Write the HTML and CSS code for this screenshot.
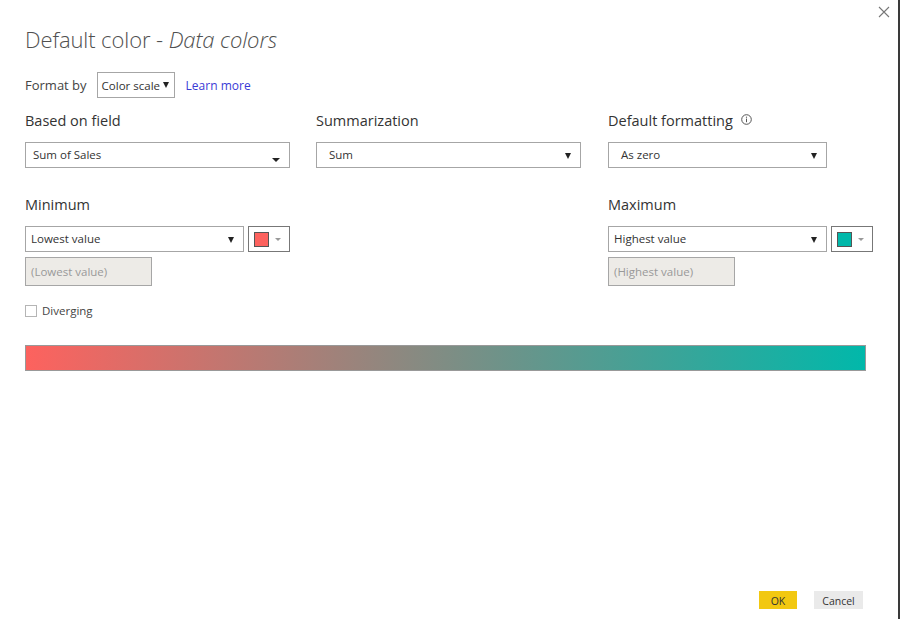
FILE: index.html
```html
<!DOCTYPE html>
<html lang="en">
<head>
    <meta charset="UTF-8">
    <title>Default color - Data colors</title>
    <link rel="stylesheet" href="styles.css">
</head>
<body>
    <div class="dialog">
        <button class="close" aria-label="Close">
            <svg width="12" height="12" viewBox="0 0 12 12"><path d="M1 1L11 11M11 1L1 11" stroke="#777" stroke-width="1.1" fill="none"/></svg>
        </button>

        <h1 class="title">Default color - <em>Data colors</em></h1>

        <div class="format-row">
            <span class="format-label">Format by</span>
            <div class="select select-small">Color scale <span class="arrow"></span></div>
            <a class="link" href="#">Learn more</a>
        </div>

        <div class="fields">
            <div class="field">
                <div class="label">Based on field</div>
                <div class="select select-field">Sum of Sales <span class="arrow arrow-low"></span></div>
            </div>
            <div class="field">
                <div class="label">Summarization</div>
                <div class="select select-wide">Sum <span class="arrow"></span></div>
            </div>
            <div class="field">
                <div class="label">Default formatting
                    <svg class="info" width="11" height="11" viewBox="0 0 11 11"><circle cx="5.5" cy="5.5" r="4.8" stroke="#555" stroke-width="1" fill="none"/><path d="M5.5 4.6V8.2" stroke="#555" stroke-width="1"/><circle cx="5.5" cy="3.2" r="0.6" fill="#555"/></svg>
                </div>
                <div class="select select-mid select-shift">As zero <span class="arrow"></span></div>
            </div>

            <div class="field field-range">
                <div class="label">Minimum</div>
                <div class="pick-row">
                    <div class="select select-mid select-tight">Lowest value <span class="arrow"></span></div>
                    <div class="color-btn"><span class="swatch swatch-low"></span><span class="mini-arrow"></span></div>
                </div>
                <div class="value-box">(Lowest value)</div>
            </div>
            <div class="field field-range"></div>
            <div class="field field-range">
                <div class="label">Maximum</div>
                <div class="pick-row">
                    <div class="select select-mid select-tight">Highest value <span class="arrow"></span></div>
                    <div class="color-btn"><span class="swatch swatch-high"></span><span class="mini-arrow"></span></div>
                </div>
                <div class="value-box">(Highest value)</div>
            </div>
        </div>

        <label class="check">
            <span class="box"></span>
            Diverging
        </label>

        <div class="gradient"></div>

        <div class="actions">
            <button class="btn btn-ok">OK</button>
            <button class="btn btn-cancel">Cancel</button>
        </div>
    </div>
</body>
</html>
```

FILE: styles.css
```css
html, body {
    margin: 0;
    height: 100%;
}

body {
    font-family: "Open Sans", "Noto Sans", Arial, sans-serif;
    color: #333;
    background: #fff;
    overflow: hidden;
}

.dialog {
    position: relative;
    box-sizing: border-box;
    width: 900px;
    height: 619px;
    padding: 0 0 10px 25px;
    border-right: 2px solid #3a3a3a;
    display: flex;
    flex-direction: column;
}

.close {
    position: absolute;
    top: 6px;
    right: 8px;
    border: none;
    background: none;
    padding: 0;
    cursor: pointer;
}

.title {
    margin: 23px 0 0;
    font-size: 22px;
    font-weight: 300;
    line-height: 32px;
    color: #505050;
    letter-spacing: -0.1px;
}

.title em {
    font-style: italic;
}

.format-row {
    display: flex;
    align-items: center;
    margin-top: 17px;
    height: 26px;
}

.format-label {
    font-size: 13px;
    margin-right: 10px;
    color: #444;
}

.link {
    font-size: 12px;
    color: #3a3ad6;
    text-decoration: none;
    margin-left: 11px;
}

.select {
    position: relative;
    box-sizing: border-box;
    height: 26px;
    border: 1px solid #a6a6a6;
    background: #fff;
    font-size: 11.5px;
    line-height: 24px;
    color: #333;
    padding-left: 8px;
}

.select-small {
    width: 78px;
    padding-left: 4px;
    font-size: 11.5px;
    line-height: 26px;
}

.select-field,
.select-wide {
    width: 265px;
}

.select-field {
    padding-left: 7px;
}

.select-wide {
    padding-left: 12px;
}

.select-mid {
    width: 219px;
}

.select-shift {
    padding-left: 12px;
}

.select-tight {
    padding-left: 5px;
}

.arrow {
    position: absolute;
    right: 9px;
    top: 10px;
    width: 0;
    height: 0;
    border-left: 3px solid transparent;
    border-right: 3px solid transparent;
    border-top: 6px solid #222;
}

.select-small .arrow {
    right: 5px;
    top: 9px;
}

.arrow-low {
    right: 9px;
    top: 15px;
    border-left-width: 4px;
    border-right-width: 4px;
    border-top-width: 4px;
}

.fields {
    display: grid;
    grid-template-columns: 291px 292px 1fr;
    margin-top: 14px;
}

.label {
    font-size: 14.5px;
    line-height: 18px;
    color: #333;
    margin-bottom: 12px;
    display: flex;
    align-items: center;
}

.info {
    margin-left: 8px;
    margin-top: -3px;
}

.field-range {
    margin-top: 28px;
}

.pick-row {
    display: flex;
    gap: 4px;
}

.color-btn {
    position: relative;
    box-sizing: border-box;
    width: 42px;
    height: 26px;
    border: 1px solid #777;
    background: #fff;
}

.swatch {
    position: absolute;
    left: 5px;
    top: 5px;
    box-sizing: border-box;
    width: 15px;
    height: 15px;
    border: 1px solid #555;
}

.swatch-low {
    background: #fd625e;
}

.swatch-high {
    background: #01b8aa;
}

.mini-arrow {
    position: absolute;
    right: 8px;
    top: 11px;
    width: 0;
    height: 0;
    border-left: 3px solid transparent;
    border-right: 3px solid transparent;
    border-top: 3px solid #999;
}

.value-box {
    box-sizing: border-box;
    width: 127px;
    height: 29px;
    margin-top: 5px;
    border: 1px solid #a6a6a6;
    background: #edebe7;
    color: #999;
    font-size: 11.5px;
    line-height: 27px;
    padding-left: 5px;
}

.check {
    display: flex;
    align-items: center;
    margin-top: 17px;
    font-size: 11.5px;
    color: #444;
}

.box {
    box-sizing: border-box;
    width: 12px;
    height: 12px;
    border: 1px solid #b5b5b5;
    margin-right: 5px;
}

.gradient {
    box-sizing: border-box;
    width: 841px;
    height: 26px;
    margin-top: 27px;
    border: 1px solid #999;
    background: linear-gradient(to right, #fd625e, #01b8aa);
}

.actions {
    margin-top: auto;
    display: flex;
    justify-content: flex-end;
    gap: 17px;
    padding-right: 35px;
}

.btn {
    border: none;
    height: 18px;
    padding: 0;
    font-family: inherit;
    font-size: 10.5px;
    line-height: 20px;
    color: #333;
    cursor: pointer;
}

.btn-ok {
    width: 38px;
    background: #f2c811;
}

.btn-cancel {
    width: 49px;
    background: #eaeaea;
}
```
